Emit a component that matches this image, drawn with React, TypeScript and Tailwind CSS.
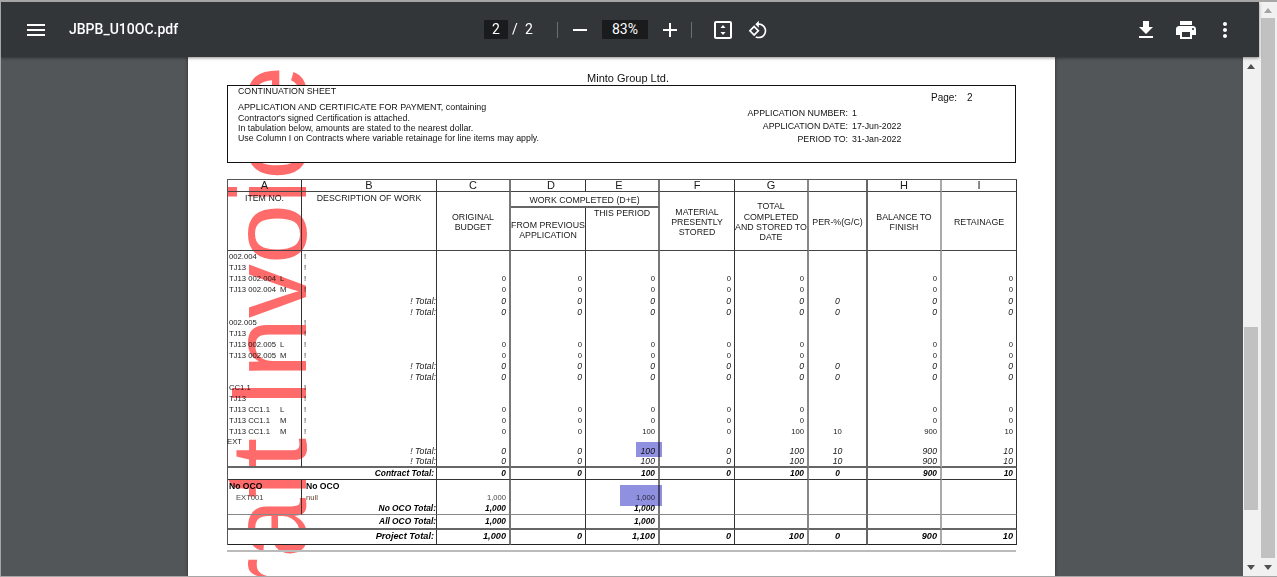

import React from "react";

const Icon = ({ d, className = "" }: { d: string; className?: string }) => (
  <svg viewBox="0 0 24 24" className={`h-6 w-6 shrink-0 fill-white ${className}`}>
    <path d={d} />
  </svg>
);

const Arrow = ({ down = false }: { down?: boolean }) => (
  <div className="flex h-[18px] items-center justify-center">
    <svg viewBox="0 0 8 5" className="h-[5px] w-[8px] fill-[#505050]">
      <path d={down ? "M0 0h8L4 5z" : "M4 0l4 5H0z"} />
    </svg>
  </div>
);

const borders = [
  "border-r border-r-[#333]",
  "border-r border-r-[#333]",
  "border-r-2 border-r-[#777]",
  "border-r border-r-[#333]",
  "border-r-2 border-r-[#777]",
  "border-r border-r-[#333]",
  "border-r-2 border-r-[#888]",
  "border-r-2 border-r-[#666]",
  "border-r-2 border-r-[#aaa]",
  "border-r border-r-[#333]",
];
const widths = ["w-[74px]", "w-[135px]", "w-[74px]", "w-[75px]", "w-[74px]", "w-[75px]", "w-[74px]", "w-[59px]", "w-[74px]", "w-[75px]"];
const letters = ["A", "B", "C", "D", "E", "F", "G", "", "H", "I"];
const letterPads = ["", "", "", "pl-[6px]", "pr-[6px]", "", "", "", "", ""];

type Row = { h: string; a?: React.ReactNode; b?: React.ReactNode; v?: (string | undefined)[]; p?: string };

const code = (n: string, c: string) => (
  <>
    <span className="inline-block w-[51px]">{n}</span>
    {c}
  </>
);
const zeros = (p?: string) => ["0", "0", "0", "0", "0", p, "0", "0"];
const hd = (t: string, h: string): Row => ({ h, a: t, b: "!" });
const line = (n: string, c: string, h: string): Row => ({ h, a: code(n, c), b: "!", v: zeros() });
const tot = (h: string): Row => ({ h, b: "T", v: zeros("0") });

const rows: Row[] = [
  hd("002.004", "h-[11px]"),
  hd("TJ13", "h-[11px]"),
  line("TJ13 002.004", "L", "h-[11px]"),
  line("TJ13 002.004", "M", "h-[12px]"),
  tot("h-[11px]"),
  tot("h-[11px]"),
  hd("002.005", "h-[10px]"),
  hd("TJ13", "h-[11px]"),
  line("TJ13 002.005", "L", "h-[11px]"),
  line("TJ13 002.005", "M", "h-[11px]"),
  tot("h-[11px]"),
  tot("h-[11px]"),
  hd("CC1.1", "h-[10px]"),
  hd("TJ13", "h-[11px]"),
  line("TJ13 CC1.1", "L", "h-[11px]"),
  line("TJ13 CC1.1", "M", "h-[11px]"),
  { h: "h-[11px]", a: code("TJ13 CC1.1", "M"), b: "!", v: ["0", "0", "100", "0", "100", "10", "900", "10"] },
  { h: "h-[9px]", a: <span className="-ml-[2px]">EXT</span> },
  { h: "h-[10px]", b: "T", v: ["0", "0", "100", "0", "100", "10", "900", "10"] },
];

const Cell = ({ i, val, cls = "" }: { i: number; val?: string; cls?: string }) => (
  <td className={`${borders[i + 2]} ${i === 5 ? "pr-0 text-center" : "pr-[3px] text-right"} ${cls}`}>{val}</td>
);

const Head = ({ children, cls = "", ...rest }: React.TdHTMLAttributes<HTMLTableCellElement> & { cls?: string }) => (
  <td {...rest} className={`text-center leading-[10.3px] ${cls}`}>
    {children}
  </td>
);

const ocoVals = ["1,000", undefined, "1,000", undefined, undefined, undefined, undefined, undefined];

export default function App() {
  return (
    <div className="h-[577px] w-[1277px] overflow-hidden border-t-2 border-b border-l border-[#a6a6a6] bg-[#f1f1f1] font-['Liberation_Sans',sans-serif]">
      <div className="flex h-full blur-[0.3px]">
        <div className="flex min-w-0 flex-1 flex-col">
          <header className="relative z-10 flex h-[55px] shrink-0 items-center bg-[#323639] pl-[23px] pr-[22px] font-['Roboto',sans-serif] text-white shadow-[0_1px_3px_rgba(0,0,0,0.45)]">
            <Icon d="M3 18h18v-2H3v2zm0-5h18v-2H3v2zm0-7v2h18V6H3z" />
            <span className="ml-[21px] w-[415px] text-[14px] font-medium">JBPB_U10OC.pdf</span>
            <span className="flex h-[19px] w-[24px] items-center justify-center bg-[#191b1c] text-[14px]">2</span>
            <span className="ml-[4px] w-[5px] text-center text-[14px]">/</span>
            <span className="ml-[8px] w-[8px] text-center text-[14px]">2</span>
            <span className="ml-[24px] h-[16px] w-px bg-[#6c6f71]" />
            <Icon className="ml-[10px]" d="M19 13H5v-2h14v2z" />
            <span className="ml-[10px] flex h-[19px] w-[46px] items-center justify-center bg-[#191b1c] text-[14px]">83%</span>
            <Icon className="ml-[10px]" d="M19 13h-6v6h-2v-6H5v-2h6V5h2v6h6v2z" />
            <span className="ml-[9px] h-[16px] w-px bg-[#6c6f71]" />
            <Icon
              className="ml-[19px]"
              d="M19 3H5c-1.1 0-2 .9-2 2v14c0 1.1.9 2 2 2h14c1.1 0 2-.9 2-2V5c0-1.1-.9-2-2-2zm0 16H5V5h14v14zM12 7l-2.5 3h5L12 7zm0 10l2.5-3h-5l2.5 3z"
            />
            <Icon
              className="ml-[13px] !h-5 !w-5"
              d="M7.34 6.41L.86 12.9l6.49 6.48 6.49-6.48-6.5-6.49zM3.69 12.9l3.66-3.66L11 12.9l-3.66 3.66-3.65-3.66zm15.67-6.26C17.61 4.88 15.3 4 13 4V.76L8.76 5 13 9.24V6c1.79 0 3.58.68 4.95 2.05 2.73 2.73 2.73 7.17 0 9.9C16.58 19.32 14.79 20 13 20c-.97 0-1.94-.21-2.84-.61l-1.49 1.49C10.02 21.62 11.51 22 13 22c2.3 0 4.61-.88 6.36-2.64 3.52-3.51 3.52-9.21 0-12.72z"
            />
            <Icon className="ml-auto" d="M19 9h-4V3H9v6H5l7 7 7-7zM5 18v2h14v-2H5z" />
            <Icon
              className="ml-[16px]"
              d="M19 8H5c-1.66 0-3 1.34-3 3v6h4v4h12v-4h4v-6c0-1.66-1.34-3-3-3zm-3 11H8v-5h8v5zm3-7c-.55 0-1-.45-1-1s.45-1 1-1 1 .45 1 1-.45 1-1 1zm-1-9H6v4h12V3z"
            />
            <Icon
              className="ml-[15px]"
              d="M12 8c1.1 0 2-.9 2-2s-.9-2-2-2-2 .9-2 2 .9 2 2 2zm0 2c-1.1 0-2 .9-2 2s.9 2 2 2 2-.9 2-2-.9-2-2-2zm0 6c-1.1 0-2 .9-2 2s.9 2 2 2 2-.9 2-2-.9-2-2-2z"
            />
          </header>

          <div className="flex min-h-0 flex-1">
            <main className="flex min-w-0 flex-1 justify-center overflow-hidden bg-[#525659]">
              <article className="relative mr-px w-[867px] shrink-0 overflow-hidden bg-white pt-[15px] pl-[39px] text-[#111] shadow-[0_0_3px_rgba(0,0,0,0.5)]">
                <div
                  aria-hidden
                  className="absolute left-[27px] top-[615px] origin-top-left -rotate-90 whitespace-nowrap text-[108px] leading-none text-[#ff6a6a]"
                >
                  Draft Invoice
                </div>

                <div className="relative w-[789px]">
                  <div className="h-[13px] pl-[13px] text-center text-[11px] leading-[13px]">Minto Group Ltd.</div>

                  <div className="flex h-[78px] border border-[#111] bg-white">
                    <div className="w-[517px] pl-[10px] pt-[1px] text-[8.8px] leading-[9px]">
                      <div>CONTINUATION SHEET</div>
                      <div className="mt-[6px] text-[8.9px] leading-[10px]">APPLICATION AND CERTIFICATE FOR PAYMENT, containing</div>
                      <div className="mt-[1px] leading-[10px]">
                        <div>Contractor's signed Certification is attached.</div>
                        <div>In tabulation below, amounts are stated to the nearest dollar.</div>
                        <div>Use Column I on Contracts where variable retainage for line items may apply.</div>
                      </div>
                    </div>
                    <div className="pt-[7px] text-[8.8px] leading-[10px]">
                      <div className="ml-[186px] flex text-[10px]">
                        <span className="w-[36px]">Page:</span>
                        <span>2</span>
                      </div>
                      <div className="mt-[5px] grid grid-cols-[103px_auto] gap-x-[4px] gap-y-[3px]">
                        <span className="text-right">APPLICATION NUMBER:</span>
                        <span>1</span>
                        <span className="text-right">APPLICATION DATE:</span>
                        <span>17-Jun-2022</span>
                        <span className="text-right">PERIOD TO:</span>
                        <span>31-Jan-2022</span>
                      </div>
                    </div>
                  </div>

                  <table className="mt-[16px] w-[789px] table-fixed border-separate border-spacing-0 border-t border-l border-[#555] text-[7.7px] leading-none">
                    <colgroup>
                      {widths.map((w, i) => (
                        <col key={i} className={w} />
                      ))}
                    </colgroup>
                    <tbody className="text-[#1a1a1a]">
                      <tr className="h-[12px] text-[11px]">
                        {letters.map((l, i) => (
                          <Head key={i} cls={`border-b border-b-[#444] !leading-[11px] ${letterPads[i]} ${borders[i]}`}>
                            {l}
                          </Head>
                        ))}
                      </tr>
                      <tr className="h-[16px] text-[8.8px]">
                        <Head rowSpan={2} cls={`border-b border-b-[#444] align-top pt-[1px] ${borders[0]}`}>
                          ITEM NO.
                        </Head>
                        <Head rowSpan={2} cls={`border-b border-b-[#444] align-top pt-[1px] ${borders[1]}`}>
                          DESCRIPTION OF WORK
                        </Head>
                        <Head rowSpan={2} cls={`border-b border-b-[#444] pt-[2px] ${borders[2]}`}>
                          ORIGINAL
                          <br />
                          BUDGET
                        </Head>
                        <Head colSpan={2} cls={`border-b-2 border-b-[#666] pt-[2px] ${borders[4]}`}>
                          WORK COMPLETED (D+E)
                        </Head>
                        <Head rowSpan={2} cls={`border-b border-b-[#444] pt-[2px] ${borders[5]}`}>
                          MATERIAL
                          <br />
                          PRESENTLY
                          <br />
                          STORED
                        </Head>
                        <Head rowSpan={2} cls={`border-b border-b-[#444] pt-[2px] ${borders[6]}`}>
                          TOTAL
                          <br />
                          COMPLETED
                          <br />
                          AND STORED TO
                          <br />
                          DATE
                        </Head>
                        <Head rowSpan={2} cls={`border-b border-b-[#444] pt-[2px] ${borders[7]}`}>
                          PER-%(G/C)
                        </Head>
                        <Head rowSpan={2} cls={`border-b border-b-[#444] pt-[2px] ${borders[8]}`}>
                          BALANCE TO
                          <br />
                          FINISH
                        </Head>
                        <Head rowSpan={2} cls={`border-b border-b-[#444] pt-[2px] ${borders[9]}`}>
                          RETAINAGE
                        </Head>
                      </tr>
                      <tr className="h-[43px] text-[8.8px]">
                        <Head cls={`whitespace-nowrap border-b border-b-[#444] pt-[2px] ${borders[3]}`}>
                          FROM PREVIOUS
                          <br />
                          APPLICATION
                        </Head>
                        <Head cls={`border-b border-b-[#444] align-top ${borders[4]}`}>THIS PERIOD</Head>
                      </tr>

                      {rows.map((r, n) => {
                        const isTotal = r.b === "T";
                        return (
                          <tr key={n} className={`${r.h} ${isTotal ? "text-[8.7px] italic" : ""}`}>
                            <td className={`whitespace-nowrap pl-[1px] ${borders[0]}`}>{r.a}</td>
                            <td className={`${isTotal ? "text-right" : "pl-[2px]"} ${borders[1]}`}>{isTotal ? "! Total:" : r.b}</td>
                            {Array.from({ length: 8 }).map((_, i) => (
                              <Cell key={i} i={i} val={r.v?.[i]} />
                            ))}
                          </tr>
                        );
                      })}

                      <tr className="h-[12px] text-[8.7px] italic">
                        <td className={`border-b-2 border-b-[#666] ${borders[0]}`} />
                        <td className={`border-b-2 border-b-[#666] text-right ${borders[1]}`}>! Total:</td>
                        {["0", "0", "100", "0", "100", "10", "900", "10"].map((v, i) => (
                          <Cell key={i} i={i} val={v} cls="border-b-2 border-b-[#666]" />
                        ))}
                      </tr>
                      <tr className="h-[12px] bg-white text-[8.4px] font-bold italic text-black">
                        <td colSpan={2} className={`border-b border-b-[#333] pr-[2px] text-right ${borders[1]}`}>
                          Contract Total:
                        </td>
                        {["0", "0", "100", "0", "100", "0", "900", "10"].map((v, i) => (
                          <Cell key={i} i={i} val={v} cls="border-b border-b-[#333]" />
                        ))}
                      </tr>

                      <tr className="h-[12px] text-[8.6px] font-bold text-black">
                        <td className={`pl-[1px] ${borders[0]}`}>No OCO</td>
                        <td className={`pl-[4px] ${borders[1]}`}>No OCO</td>
                        {Array.from({ length: 8 }).map((_, i) => (
                          <Cell key={i} i={i} />
                        ))}
                      </tr>
                      <tr className="h-[11px] text-[7.6px] text-[#444]">
                        <td className={`pl-[8px] ${borders[0]}`}>EXT001</td>
                        <td className={`pl-[4px] text-[#5a3b2a] ${borders[1]}`}>null</td>
                        {ocoVals.map((v, i) => (
                          <Cell key={i} i={i} val={v} />
                        ))}
                      </tr>
                      <tr className="h-[12px] text-[8.4px] font-bold italic text-black">
                        <td className={`border-b border-b-[#888] ${borders[0]}`} />
                        <td className={`border-b border-b-[#888] text-right ${borders[1]}`}>No OCO Total:</td>
                        {ocoVals.map((v, i) => (
                          <Cell key={i} i={i} val={v} cls="border-b border-b-[#888]" />
                        ))}
                      </tr>
                      <tr className="h-[15px] text-[8.4px] font-bold italic text-black">
                        <td colSpan={2} className={`border-b-2 border-b-[#666] text-right ${borders[1]}`}>
                          All OCO Total:
                        </td>
                        {ocoVals.map((v, i) => (
                          <Cell key={i} i={i} val={v} cls="border-b-2 border-b-[#666]" />
                        ))}
                      </tr>
                      <tr className="h-[15px] bg-white text-[9.2px] font-bold italic text-black">
                        <td colSpan={2} className={`border-b border-b-[#222] pr-[2px] pb-[1px] text-right ${borders[1]}`}>
                          Project Total:
                        </td>
                        {["1,000", "0", "1,100", "0", "100", "0", "900", "10"].map((v, i) => (
                          <Cell key={i} i={i} val={v} cls="border-b border-b-[#222] pb-[1px]" />
                        ))}
                      </tr>
                    </tbody>
                  </table>
                  <div className="mt-[5px] h-[2px] w-[789px] bg-[#bbb]" />
                </div>

                <div className="absolute left-[448px] top-[385px] h-[15px] w-[26px] bg-[#7474d8] opacity-80 mix-blend-multiply" />
                <div className="absolute left-[432px] top-[428px] h-[21px] w-[42px] bg-[#7474d8] opacity-80 mix-blend-multiply" />
              </article>
            </main>

            <aside className="flex w-[16px] shrink-0 flex-col bg-[#f1f1f1]">
              <Arrow />
              <div className="mx-px mt-[252px] h-[183px] shrink-0 bg-[#c1c1c1]" />
              <div className="mt-auto">
                <Arrow down />
              </div>
            </aside>
          </div>
        </div>

        <aside className="flex w-[18px] shrink-0 flex-col bg-[#f1f1f1]">
          <div className="flex h-[16px] items-center justify-center">
            <svg viewBox="0 0 8 5" className="h-[5px] w-[8px] fill-[#a3a3a3]">
              <path d="M4 0l4 5H0z" />
            </svg>
          </div>
          <div className="ml-[2px] h-[540px] w-[14px] shrink-0 bg-[#c1c1c1]" />
          <div className="mt-auto">
            <Arrow down />
          </div>
        </aside>
      </div>
    </div>
  );
}
